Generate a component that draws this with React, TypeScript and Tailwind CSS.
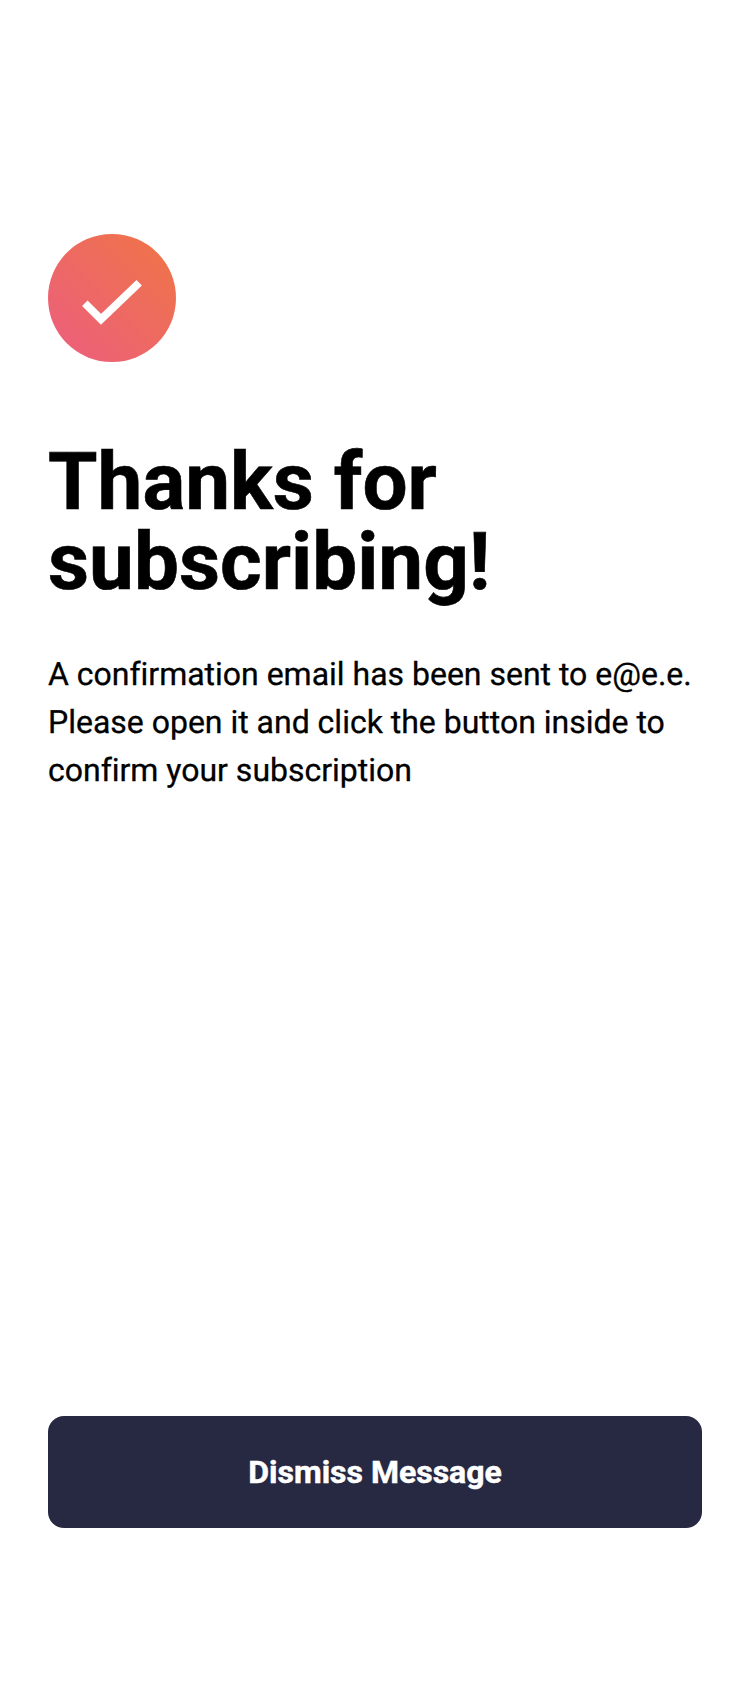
export default function App() {
  return (
    <main className="flex h-[1684px] w-[750px] flex-col bg-white px-12 pt-[234px] pb-[156px] font-['Roboto',sans-serif] text-black [font-variant-ligatures:none] [text-rendering:geometricPrecision]">
      <svg className="size-32 shrink-0" viewBox="0 0 64 64" fill="none" aria-hidden="true">
        <defs>
          <linearGradient id="badge" x1="100%" x2="0%" y1="0%" y2="100%">
            <stop offset="0%" stopColor="#EF7544" />
            <stop offset="100%" stopColor="#EC5E80" />
          </linearGradient>
        </defs>
        <circle cx="32" cy="32" r="32" fill="url(#badge)" />
        <path stroke="#FFF" strokeWidth="3.9" d="M18.4 34.6 26.5 42.6 45.6 24.4" />
      </svg>
      <h1 className="mt-20 text-[80px] leading-[80px] font-bold [-webkit-text-stroke:0.6px]">
        Thanks for
        <br />
        subscribing!
      </h1>
      <p className="mt-12 text-[32px] leading-[48px] tracking-[-0.01px] [-webkit-text-stroke:0.3px]">
        A confirmation email has been sent to e@e.e. Please open it and click the button inside to confirm your subscription
      </p>
      <button className="mt-auto h-28 w-[654px] shrink-0 rounded-2xl bg-[#272842] text-[32px] font-bold text-white [-webkit-text-stroke:0.5px]">
        Dismiss Message
      </button>
    </main>
  );
}
